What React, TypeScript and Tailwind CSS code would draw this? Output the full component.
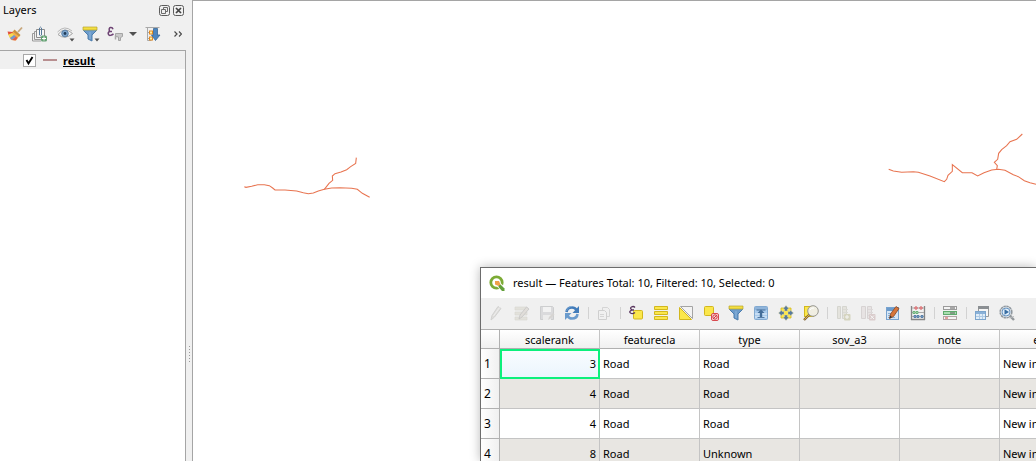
import type { ReactNode } from "react";

type IconProps = { children: ReactNode; wide?: boolean; faded?: boolean };

function Icon({ children, wide, faded }: IconProps) {
  return (
    <svg
      aria-hidden="true"
      viewBox={wide ? "0 0 18 16" : "0 0 16 16"}
      className={`h-4 shrink-0 ${wide ? "w-[18px]" : "w-4"} ${faded ? "opacity-35" : ""}`}
      fill="none"
    >
      {children}
    </svg>
  );
}

const broom = (
  <Icon>
    <path d="M15 1.500 11 6" stroke="#c8a77c" strokeWidth="1.800" />
    <path d="M7.500 3.500 13.500 9l-1.500 2-6.500-5z" fill="#c8913f" />
    <path d="M6 5.500 12 10.500 9 14.500l-5-.5L1 8z" fill="#f3b04a" />
    <path d="M.5 5.500 6 6 4 9 1.500 8.500z" fill="#e2503c" />
    <path d="M1.500 8.500 5 7l2 2-4 3z" fill="#f2dc55" />
    <path d="m3 12 4-3 2 1.500-4 3.500z" fill="#7396cf" />
    <path d="m5 14 4-3.500 1.500 1.500-2 2.500z" fill="#e2604a" />
  </Icon>
);

const addGroup = (
  <Icon>
    <path d="M4.500 3.500h8v8h-8z" fill="#f5f5f5" stroke="#8b8b8b" />
    <path d="M4 5.500H2.500v8H10M2 7.500H.5v7.500H9" stroke="#9a9a9a" />
    <path d="M7.500 9V2Q8.500.2 9.500 2v7Q8.500 10.500 7.500 9" stroke="#54789a" />
    <rect x="9" y="9.500" width="6" height="6" rx="1.500" fill="#63a072" />
    <path d="M12 10.500v4m-2-2h4" stroke="#fff" />
  </Icon>
);

const eye = (
  <Icon wide>
    <path d="M1 8.500Q7.500 0 15.500 7.500 8 14.500 1 8.500" fill="#f4f4f4" stroke="#a4a4a4" />
    <path d="M.5 6Q7.500-1.500 15 5" stroke="#b9b9b9" />
    <circle cx="8" cy="7.500" r="3.300" fill="#7fa6cd" stroke="#5a82aa" />
    <circle cx="8" cy="7.500" r="1.400" fill="#1f3b57" />
    <path d="M12.500 12.500h5L15 15.500z" fill="#505050" />
  </Icon>
);

const funnelShape = (
  <>
    <path d="M1.500 2.500h13v2L10 9v6l-4-2V9L1.500 4.500z" fill="#6b9bcb" stroke="#4b7dae" />
    <path d="M1 1h14v3H1z" fill="#f3df42" stroke="#b8a52d" strokeWidth=".7" />
    <path d="M8 6v7" stroke="#8db5dc" />
  </>
);

const filterMenu = (
  <Icon wide>
    {funnelShape}
    <path d="M12.500 12.500h5L15 15.500z" fill="#505050" />
  </Icon>
);

const epsilonFilter = (
  <Icon>
    <path d="M6 3.200Q5.500 1.200 3.500 1.500T2.500 5.500Q.5 6.500 1.500 8.500T6.500 8M2.500 5.500H5" stroke="#6d4273" strokeWidth="1.500" />
    <path d="M8.500 7.500h7v3l-2 1V14.500h-2V11l-3-.5z" fill="#c9c9c9" stroke="#a4a4a4" />
    <path d="M8.500 9.500v4" stroke="#a8a8a8" strokeWidth="1.500" />
  </Icon>
);

const expandTree = (
  <Icon>
    <path d="M.5 1.500h14M2.500 1.500v13h4M2.500 6.500h2m-2 6h2" stroke="#a8a8a8" />
    <rect x="4.500" y="5" width="3" height="3" fill="#fff2a8" stroke="#e58a1f" />
    <rect x="4.500" y="11" width="3" height="3" fill="#fff2a8" stroke="#e58a1f" />
    <path d="M8.500 2.500h4V9H15l-4.500 5.500L6.500 9h2z" fill="#4d86c0" stroke="#386796" strokeWidth=".8" />
  </Icon>
);

const pencil = (
  <Icon faded>
    <path d="m2 15 1-4.500 6-9 3 2L5.500 12z" fill="#c2bfb8" stroke="#9a9a96" />
    <path d="m4.500 11 6-8.500" stroke="#ececec" />
  </Icon>
);

const multiEdit = (
  <Icon faded>
    <path d="M1 2h12v3H1zm0 5h12v3H1zm0 5h12v3H1z" fill="#c9c6b6" stroke="#aba797" strokeWidth=".6" />
    <path d="m5 14 1-4 6.500-8L15 4l-7 8z" fill="#c4bcb0" stroke="#777" strokeWidth=".8" />
  </Icon>
);

const save = (
  <Icon faded>
    <path d="M1.500 1.500h12l1 1v12h-13z" fill="#b2b4b8" stroke="#8e9094" />
    <path d="M4 2h8v5H4z" fill="#f6f6f6" />
    <path d="M4 10h8v5H4z" fill="#e7e7e7" />
    <path d="m9 15 1-3 4-4 1.500 1.500-4 4z" fill="#a8a29b" />
  </Icon>
);

const reload = (
  <Icon>
    <path d="M2.500 7Q3 2.500 8 2.500q3 0 4.500 2.500" stroke="#427cba" strokeWidth="2.600" />
    <path d="M15 1v7H8.500z" fill="#427cba" />
    <path d="M13.500 9Q13 13.500 8 13.500q-3 0-4.500-2.500" stroke="#6a9bcd" strokeWidth="2.600" />
    <path d="M1 15V8h6.500z" fill="#6a9bcd" />
    <path d="M2.500 6Q4 1.500 8 1.500" stroke="#86b2dd" strokeWidth=".7" />
  </Icon>
);

const copy = (
  <Icon faded>
    <path d="M6.500 2.500h5l2 2v7h-7z" fill="#eee" stroke="#a4a4a4" />
    <path d="M2.500 5.500h6l2 2v7h-8z" fill="#f2f2f2" stroke="#949494" />
    <path d="M4 9.500h4m-4 2h4" stroke="#a4a4a4" />
  </Icon>
);

const selectExpression = (
  <Icon>
    <rect x="5.500" y="5.500" width="9" height="8.500" rx="1" fill="#fbe74b" stroke="#d2b71e" />
    <path d="M7 2.500Q5.500.8 3.500 2T4 5Q.5 6.500 2.500 8T7 7.500M3.500 5H6" stroke="#59365f" strokeWidth="1.300" />
  </Icon>
);

const selectAll = (
  <Icon>
    <path d="M1.500 1.500h13v3h-13zm0 5h13v3h-13zm0 5h13v3h-13z" fill="#fbe74b" stroke="#d2b71e" />
  </Icon>
);

const invert = (
  <Icon>
    <path d="M2.500 1.500h12v12z" fill="#f3f3f3" stroke="#a4a4a4" />
    <path d="M1.500 2.500v12h12z" fill="#fbe74b" stroke="#d2b71e" />
  </Icon>
);

const deselect = (
  <Icon>
    <rect x="1.500" y="1.500" width="9" height="9" rx="1" fill="#fbe74b" stroke="#d2b71e" />
    <rect x="8.500" y="8.500" width="7" height="7" rx="1.500" fill="#f8dada" stroke="#d84a50" />
    <circle cx="12" cy="12" r="2.200" stroke="#d2353c" />
    <path d="m10 14 4-4" stroke="#d2353c" />
  </Icon>
);

const filter = <Icon>{funnelShape}</Icon>;

const moveTop = (
  <Icon>
    <rect x="1.500" y="1.500" width="13" height="13" rx="1" fill="#a9cbed" stroke="#82a9d0" />
    <path d="M2 2h12v3H2z" fill="#8fb4da" />
    <path d="M2 9h12M2 12h12" stroke="#e2eef9" />
    <path d="M3.500 5h9" stroke="#426c98" />
    <path d="m8 4.500 3.500 3.500H9.200v4H6.800V8H4.500z" fill="#426c98" />
    <path d="M4.500 12.500h7" stroke="#557ca5" />
  </Icon>
);

const panTo = (
  <Icon>
    <path d="M3 3h10v10H3z" fill="#fbe74b" stroke="#d2b71e" strokeWidth=".8" />
    <path
      d="m8 .5 3 3.500H9.500v2h-3V4H5zm0 15 3-3.500H9.500v-2h-3v2H5zM.5 8 4 5v1.500h2v3H4V11zm15 0L12 5v1.500h-2v3h2V11z"
      fill="#56799d"
      stroke="#e8dfa0"
      strokeWidth=".4"
    />
  </Icon>
);

const zoomTo = (
  <Icon>
    <rect x="1.500" y="1.500" width="9" height="10" fill="#fbe74b" stroke="#d2b71e" />
    <path d="m7 9-6 6" stroke="#806536" strokeWidth="2.400" />
    <path d="m6.500 9.500-5 5" stroke="#e4b647" />
    <circle cx="10" cy="6" r="5.300" fill="#f0eee2" stroke="#979790" />
    <path d="M7 5q1-2.500 4-2" stroke="#fff" />
  </Icon>
);

const addField = (
  <Icon faded>
    <path d="M2.500 1.500h3v12h-3zM7.500 1.500h4v12h-4z" fill="#cfcdbc" stroke="#a6a494" />
    <path d="M8 4.500h5m-5 3h5m-5 3h5" stroke="#b6b4a4" />
    <rect x="9" y="9" width="6.500" height="6.500" rx="1" fill="#a4a266" />
    <path d="M12 10v4m-2-2h4" stroke="#fff" />
  </Icon>
);

const deleteField = (
  <Icon faded>
    <path d="M1.500 1.500h4v12h-4zM7.500 1.500h4v12h-4z" fill="#d8cccc" stroke="#aaa0a0" />
    <path d="M8 4.500h5m-5 3h5m-5 3h5" stroke="#b8adad" />
    <rect x="9" y="9" width="6.500" height="6.500" rx="1" fill="#b28a8a" />
    <path d="m10.500 10.500 3.500 3.500m0-3.500-3.500 3.500" stroke="#fff" />
  </Icon>
);

const editField = (
  <Icon>
    <rect x="1.500" y="2.500" width="12" height="12" fill="#d7e6f5" stroke="#78a3cf" />
    <path d="M2 3h11v3H2z" fill="#6c9bcb" />
    <path d="M3 8.500h8m-8 2h6m-6 2h7" stroke="#88aed4" />
    <path d="m4.500 13.500 1-4.500 5.500-7.500 3 2-5.500 8z" fill="#d7763b" stroke="#894926" strokeWidth=".8" />
    <path d="m4.500 13.500.7-2.700 1.800 1.300z" fill="#333" />
  </Icon>
);

const abacus = (
  <Icon>
    <path d="M1.500 1v14m13-14v14M1 14.500h14" stroke="#858585" strokeWidth="1.300" />
    <path d="M2 3h12M2 7.500h12M2 11.500h12" stroke="#aaa" />
    <path d="M5 2h2v2H5zm5 0h2v2h-2z" fill="#fff" stroke="#d65558" />
    <path d="M3 6.500h2v2H3zm3 0h2v2H6z" fill="#bce2c2" stroke="#6cb27a" />
    <path d="M4 10.500h2v2H4zm3 0h2v2H7zm4 0h2v2h-2z" fill="#7fa6cb" stroke="#587fa9" />
  </Icon>
);

const conditional = (
  <Icon>
    <rect x="1.500" y="1.500" width="13" height="3" fill="#f4f4f4" stroke="#9b9b9b" />
    <rect x="1.500" y="6.500" width="13" height="3" fill="#a9ddb0" stroke="#5faa6c" />
    <rect x="1.500" y="11.500" width="13" height="3" fill="#f4f4f4" stroke="#b0a4a4" />
    <path d="M8 3h5M8 8h5" stroke="#5b5b5b" />
    <path d="M3 13h3" stroke="#d34646" />
  </Icon>
);

const dock = (
  <Icon>
    <path d="M4.500 1.500h10v10h-10z" fill="#f6f6f6" stroke="#999" />
    <path d="M4 1h11v3H4z" fill="#8b8f93" />
    <rect x="1.500" y="6.500" width="10" height="8" fill="#e0edf8" stroke="#7ca5cd" />
    <path d="M2 7h9v2H2z" fill="#8ab1d8" />
    <path d="M2 11.500h9M5.500 9v5m3-5v5" stroke="#afcae4" />
  </Icon>
);

const actions = (
  <Icon>
    <circle cx="7" cy="7" r="5.800" fill="#e6ebf0" stroke="#8f979e" strokeWidth="1.600" strokeDasharray="2.400 .6" />
    <circle cx="7" cy="7" r="4" fill="#e0edf9" stroke="#6794c1" />
    <path d="M5.500 4.300v5.400L10 7z" fill="#376da2" />
    <path d="m11 11 4 4" stroke="#92979b" strokeWidth="2.400" />
    <path d="m10.500 13 4.500-1.500" stroke="#b5b8bb" />
  </Icon>
);

type Tool = { label: string; icon: ReactNode; disabled?: boolean };

const toolGroups: Tool[][] = [
  [
    { label: "Toggle editing", icon: pencil, disabled: true },
    { label: "Multi edit", icon: multiEdit, disabled: true },
    { label: "Save edits", icon: save, disabled: true },
    { label: "Reload table", icon: reload },
  ],
  [{ label: "Copy rows", icon: copy, disabled: true }],
  [
    { label: "Select by expression", icon: selectExpression },
    { label: "Select all", icon: selectAll },
    { label: "Invert selection", icon: invert },
    { label: "Deselect all", icon: deselect },
    { label: "Filter by form", icon: filter },
    { label: "Move selection to top", icon: moveTop },
    { label: "Pan to selection", icon: panTo },
    { label: "Zoom to selection", icon: zoomTo },
  ],
  [
    { label: "New field", icon: addField, disabled: true },
    { label: "Delete field", icon: deleteField, disabled: true },
    { label: "Organize columns", icon: editField },
    { label: "Field calculator", icon: abacus },
  ],
  [{ label: "Conditional formatting", icon: conditional }],
  [
    { label: "Dock table", icon: dock },
    { label: "Actions", icon: actions },
  ],
];

const layerTools: Tool[] = [
  { label: "Layer styling", icon: broom },
  { label: "Add group", icon: addGroup },
  { label: "Map themes", icon: eye },
  { label: "Filter legend", icon: filterMenu },
  { label: "Filter by expression", icon: epsilonFilter },
];

function ToolButton({ label, icon, disabled }: Tool) {
  return (
    <button type="button" aria-label={label} disabled={disabled} className="flex h-6 w-[25px] shrink-0 items-center pl-1">
      {icon}
    </button>
  );
}

function LayersPanel() {
  return (
    <aside className="flex w-[186px] shrink-0 flex-col">
      <header className="flex h-5 items-center gap-[3px] pr-0.5 pl-[3px]">
        <h2 className="flex-1">Layers</h2>
        <button type="button" aria-label="Float panel">
          <svg viewBox="0 0 11 11" className="size-[11px]" fill="none" stroke="#5c5c5c">
            <rect x=".5" y=".5" width="10" height="10" rx="2" />
            <path d="M4.500 4V2.500h4v4H7M2.500 4.500h4v4h-4z" strokeWidth=".9" />
          </svg>
        </button>
        <button type="button" aria-label="Close panel">
          <svg viewBox="0 0 11 11" className="size-[11px]" fill="none" stroke="#5c5c5c">
            <rect x=".5" y=".5" width="10" height="10" rx="2" />
            <path d="m3 3 5 5m0-5L3 8" stroke="#444" strokeWidth="1.700" />
          </svg>
        </button>
      </header>
      <div className="flex h-[30px] items-center pb-0.5 pl-[3px]">
        {layerTools.map((tool) => (
          <ToolButton key={tool.label} {...tool} />
        ))}
        <button type="button" aria-label="Filter options" className="flex h-6 w-[13px] shrink-0 items-center pl-px">
          <svg viewBox="0 0 8 4" className="h-1 w-2">
            <path d="M0 0h8L4 4z" fill="#505050" />
          </svg>
        </button>
        <ToolButton label="Expand all" icon={expandTree} />
        <button type="button" aria-label="More tools" className="flex h-6 items-center pl-2">
          <svg viewBox="0 0 8 6" className="h-1.5 w-2" fill="none" stroke="#4a4a4a" strokeWidth="1.200">
            <path d="m.5.5 2.500 2.500L.5 5.500M5 .5 7.500 3 5 5.500" />
          </svg>
        </button>
      </div>
      <ul className="flex-1 border-t border-r border-[#a5a5a5] bg-white">
        <li className="flex h-[18px] items-center bg-[#f0f0f0] pl-[23px]">
          <label className="flex items-center">
            <span className="relative flex size-[13px]">
              <input
                type="checkbox"
                defaultChecked
                className="peer size-[13px] appearance-none border border-[#a8a8a8] bg-white"
              />
              <svg
                viewBox="0 0 13 13"
                className="pointer-events-none absolute inset-0 hidden size-[13px] peer-checked:block"
                fill="none"
                stroke="#000"
                strokeWidth="1.900"
              >
                <path d="m3.500 6 2 3.500L9.500 3" />
              </svg>
            </span>
            <span className="mr-1.5 ml-[7px] h-0.5 w-3.5 bg-[#b88f90]" />
            <span className="pt-0.5 font-bold underline">result</span>
          </label>
        </li>
      </ul>
    </aside>
  );
}

function Splitter() {
  return (
    <div className="flex w-1.5 shrink-0 flex-col items-center justify-center gap-0.5 pt-[246px]">
      {[0, 1, 2, 3, 4, 5].map((dot) => (
        <span key={dot} className="size-px bg-[#9a9a9a]" />
      ))}
    </div>
  );
}

function MapCanvas() {
  return (
    <svg role="img" aria-label="Road network" className="h-full w-full" fill="none" stroke="#e87450" strokeWidth="3.200">
      <g transform="translate(42 144) scale(.33333)">
        <path d="M28 125l5 2 17-3 18-5h20l15 3 10 7 7 6h30l35 3 20 5 15 3 15-2 15-6 18-5 22-4 25-1 35 2 17 3 15 12 15 8 7 4" />
        <path d="M268 133l14-18 11-9-1-13 8-7 18-5 17-7 12-9 15-10 2-17" />
      </g>
      <g transform="translate(687 124) scale(.33333)">
        <path d="M26 133l14 5 25 4 35-2 15 2 35 11 43 17 7-7 4-12 13-12v-20l30 24h29l17 10 19-10 23-8 20-2 20 3 25 13 15 6 18 12 17 6 18 5" />
        <path d="M350 133l2-11-9-10 10-9 3-18 9-11 15-12 10-12 20-7 17-16" />
      </g>
    </svg>
  );
}

const columns = ["scalerank", "featurecla", "type", "sov_a3", "note", "edited"];
const rows = [
  ["3", "Road", "Road", "", "", "New in version"],
  ["4", "Road", "Road", "", "", "New in version"],
  ["4", "Road", "Road", "", "", "New in version"],
  ["8", "Road", "Unknown", "", "", "New in version"],
];

function AttributeTable() {
  return (
    <table className="w-[619px] table-fixed border-separate border-spacing-0">
      <colgroup>
        <col className="w-[19px]" />
        {columns.map((name) => (
          <col key={name} className="w-[100px]" />
        ))}
      </colgroup>
      <thead>
        <tr className="h-5">
          <td className="border-y border-r border-[#b0b0b0] bg-linear-to-b from-white to-[#f0f0f0]" />
          {columns.map((name) => (
            <th
              key={name}
              scope="col"
              className="border-y border-r border-y-[#b0b0b0] border-r-[#c4c4c4] bg-linear-to-b from-white to-[#f0f0f0] p-0 pt-0.5 font-normal"
            >
              {name}
            </th>
          ))}
        </tr>
      </thead>
      <tbody>
        {rows.map((row, index) => (
          <tr key={index} className="h-[30px] bg-white even:bg-[#e8e6e2]">
            <th
              scope="row"
              className="border-r border-b border-[#b0b0b0] bg-linear-to-r from-white to-[#f0f0f0] p-0 pl-[3px] text-left text-[12px] font-normal"
            >
              {index + 1}
            </th>
            {row.map((value, column) => (
              <td
                key={column}
                className={`overflow-hidden border-r border-b border-[#c4c4c4] px-[3px] py-0 whitespace-nowrap ${
                  column === 0 ? "text-right" : ""
                } ${
                  index === 0 && column === 0
                    ? "bg-linear-to-b from-[#fafdff] to-[#eaf5fd] outline-2 -outline-offset-2 outline-[#0cf07c]"
                    : ""
                }`}
              >
                {value}
              </td>
            ))}
          </tr>
        ))}
      </tbody>
    </table>
  );
}

function AttributeWindow() {
  return (
    <section className="absolute top-[267px] right-0 bottom-0 left-[480px] overflow-hidden border-t border-l border-[#6c6c6c] bg-white shadow-[0_0_10px_rgba(0,0,0,0.28)]">
      <header className="flex h-[30px] items-center gap-2 pl-2">
        <svg viewBox="0 0 16 16" className="size-4" fill="none" aria-hidden="true">
          <circle cx="7.500" cy="7.500" r="5.700" stroke="#7cab35" strokeWidth="2.800" />
          <path d="M7 7 15.500 15.500" stroke="#fff" strokeWidth="5" />
          <path d="M9.500 9.500h2l4 4V16h-2.500l-3.500-4z" fill="#62a03a" />
          <path d="M6 6h4l1.500 3.500L9.500 11 6 9.500z" fill="#f0a04a" />
        </svg>
        <h1>result — Features Total: 10, Filtered: 10, Selected: 0</h1>
      </header>
      <div className="flex h-[31px] items-center bg-[#f0f0f0] pb-px pl-1">
        {toolGroups.map((group, index) => (
          <div key={index} className="flex items-center">
            {index > 0 && <span className="mr-[3px] ml-[3px] h-3 w-px bg-[#d2d2d2]" />}
            {group.map((tool) => (
              <ToolButton key={tool.label} {...tool} />
            ))}
          </div>
        ))}
      </div>
      <AttributeTable />
    </section>
  );
}

export default function App() {
  return (
    <div className="relative flex h-screen overflow-hidden bg-[#f0f0f0] font-['Noto_Sans',sans-serif] text-[11px] leading-4 text-black">
      <LayersPanel />
      <Splitter />
      <main className="min-w-0 flex-1 border-t border-l border-[#a5a5a5] bg-white">
        <MapCanvas />
      </main>
      <AttributeWindow />
    </div>
  );
}
